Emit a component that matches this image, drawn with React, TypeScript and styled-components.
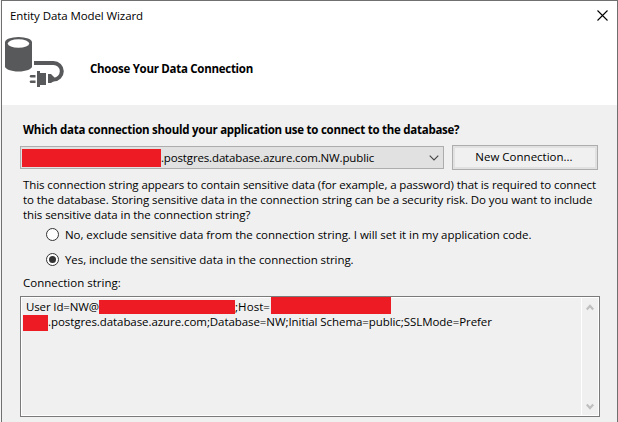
import React from "react";
import styled, { createGlobalStyle } from "styled-components";

const GlobalStyle = createGlobalStyle`
  *, *::before, *::after { box-sizing: border-box; }
  body {
    margin: 0;
    background: #f0f0f0;
    overflow: hidden;
  }
`;

const Dialog = styled.div`
  width: 617px;
  height: 422px;
  margin-left: 1px;
  border: 1px solid #707070;
  border-bottom: 0;
  background: #f0f0f0;
  color: #000;
  font: 11.5px/15px "Open Sans", "Noto Sans", sans-serif;
  overflow: hidden;
  box-shadow: -1px 0 #f6f6f6;
`;

const Header = styled.header`
  height: 104px;
  background: #fff;
`;

const TitleBar = styled.div`
  display: flex;
  justify-content: space-between;
  height: 34px;
  padding: 7px 9px 0 8px;
`;

const CloseIcon = styled.svg`
  width: 11px;
  height: 11px;
  margin-top: 2px;
`;

const Banner = styled.div`
  display: flex;
  height: 60px;
  padding-left: 2px;
`;

const DatabaseIcon = styled.svg`
  width: 62px;
  height: 54px;
  margin-right: 24px;
`;

const Text = styled.span<{ $track?: number; $bold?: boolean }>`
  display: block;
  flex: none;
  height: 15px;
  white-space: pre;
  letter-spacing: ${(p) => p.$track ?? 0}px;
  font-weight: ${(p) => (p.$bold ? 700 : 400)};
`;

const BannerTitle = styled(Text)`
  margin-top: 26px;
`;

const Body = styled.main`
  display: flex;
  flex-direction: column;
  padding: 17px 17px 0 18px;
`;

const Question = styled(Text)`
  margin-left: 3px;
`;

const ConnectionRow = styled.div`
  display: flex;
  align-items: flex-start;
  gap: 8px;
  height: 25px;
  margin-top: 8px;
`;

const Select = styled.div`
  display: flex;
  align-items: center;
  width: 424px;
  height: 23px;
  margin-top: 1px;
  padding: 0 4px 0 1px;
  border: 1px solid #adadad;
  background: #e1e1e1;
`;

const SelectText = styled(Text)`
  flex: 1;
`;

const Chevron = styled.svg`
  width: 10px;
  height: 6px;
`;

const Redaction = styled.span<{ $w: number; $h: number }>`
  flex: none;
  width: ${(p) => p.$w}px;
  height: ${(p) => p.$h}px;
  background: #ed1c24;
`;

const Button = styled.button`
  display: flex;
  justify-content: center;
  width: 146px;
  height: 25px;
  padding: 3px 2px 0 0;
  border: 1px solid #adadad;
  background: #f0f0f0;
  box-shadow: inset 0 0 0 2px #e1e1e1;
  color: inherit;
  font: inherit;
`;

const Paragraph = styled.div`
  margin: 7px 0 5px 3px;
`;

const Option = styled.label`
  display: flex;
  height: 15px;
  margin: 0 0 10px 26px;
  gap: 6px;
`;

const RadioIcon = styled.svg`
  width: 13px;
  height: 13px;
  margin-top: 1px;
`;

const FieldLabel = styled(Text)`
  margin: -2px 0 6px 3px;
`;

const StringBox = styled.div`
  display: flex;
  width: 580px;
  height: 121px;
  border: 1px solid #7a7a7a;
  background: #f0f0f0;
  box-shadow: inset 0 0 0 1px #fff;
`;

const StringContent = styled.div`
  flex: 1;
  padding-left: 2px;
`;

const StringLine = styled.div<{ $h: number; $indent?: number; $align?: string }>`
  display: flex;
  align-items: ${(p) => p.$align ?? "flex-end"};
  height: ${(p) => p.$h}px;
  padding-left: ${(p) => p.$indent ?? 0}px;
`;

const ContinuationLine = styled(StringLine)`
  margin-top: 1px;
`;

const HostText = styled(Text)`
  margin-top: -1px;
`;

const Cell = styled(Text)<{ $w: number }>`
  width: ${(p) => p.$w}px;
`;

const ScrollBar = styled.div`
  display: flex;
  flex-direction: column;
  justify-content: space-between;
  align-items: center;
  width: 18px;
  margin: 1px 0;
  padding: 6px 2px 5px 0;
  border-left: 1px solid #fff;
`;

const ScrollArrow = styled.svg`
  width: 8px;
  height: 7px;
`;

function Radio({ checked }: { checked?: boolean }) {
  return (
    <RadioIcon viewBox="0 0 13 13">
      <circle cx="6.5" cy="6.5" r="6" fill="#fff" stroke="#333" />
      {checked && <circle cx="6.5" cy="6.5" r="3.5" fill="#333" />}
    </RadioIcon>
  );
}

const warning: [string, number][] = [
  ["This connection string appears to contain sensitive data (for example, a password) that is required to connect", -0.1],
  ["to the database. Storing sensitive data in the connection string can be a security risk. Do you want to include", -0.08],
  ["this sensitive data in the connection string?", -0.07],
];

export default function App() {
  return (
    <>
      <GlobalStyle />
      <Dialog>
        <Header>
          <TitleBar>
            <Text $track={-0.09}>Entity Data Model Wizard</Text>
            <CloseIcon viewBox="0 0 11 11">
              <path d="M.5.5l10 10M10.5.5l-10 10" stroke="#000" strokeWidth="1.1" />
            </CloseIcon>
          </TitleBar>
          <Banner>
            <DatabaseIcon viewBox="4 35 62 54">
              <path d="M5 42v24.500c0 2.500 6 5 13.500 5s13.500-2.500 13.500-5V42z" fill="#58595b" />
              <ellipse cx="18.500" cy="42.500" rx="13.500" ry="5.500" fill="#58595b" />
              <ellipse cx="18.500" cy="43.500" rx="10.700" ry="4.300" fill="#fff" />
              <path d="M34 63h19.500a8.300 8.300 0 0 1 0 16.600H50" fill="none" stroke="#58595b" strokeWidth="4" />
              <path d="M37 71h3v2h6v12h-6v2h-3zM48 74h3l3 3v4l-3 2h-3zM30.500 75h5v2.500h-5l-1-1.200zM30.500 80.500h5v2.500h-5l-1-1.200z" fill="#58595b" />
            </DatabaseIcon>
            <BannerTitle $bold $track={-0.28}>Choose Your Data Connection</BannerTitle>
          </Banner>
        </Header>
        <Body>
          <Question $bold $track={-0.26}>
            Which data connection should your application use to connect to the database?
          </Question>
          <ConnectionRow>
            <Select>
              <Redaction $w={139} $h={18} />
              <SelectText $track={-0.147}>.postgres.database.azure.com.NW.public</SelectText>
              <Chevron viewBox="0 0 10 6">
                <path d="M.7.7L5 5 9.3.7" fill="none" stroke="#444" strokeWidth="1.1" />
              </Chevron>
            </Select>
            <Button>
              <Text>New Connection...</Text>
            </Button>
          </ConnectionRow>
          <Paragraph>
            {warning.map(([line, track]) => (
              <Text key={line} $track={track}>{line}</Text>
            ))}
          </Paragraph>
          <Option>
            <Radio />
            <Text $track={-0.042}>
              No, exclude sensitive data from the connection string. I will set it in my application code.
            </Text>
          </Option>
          <Option>
            <Radio checked />
            <Text $track={-0.075}>Yes, include the sensitive data in the connection string.</Text>
          </Option>
          <FieldLabel>Connection string:</FieldLabel>
          <StringBox>
            <StringContent>
              <StringLine $h={17} $indent={3}>
                <Cell $w={73} $track={-0.13}>User Id=NW@</Cell>
                <Redaction $w={136} $h={14} />
                <Cell $w={36} $track={0.07}>;Host=</Cell>
                <Redaction $w={120} $h={17} />
              </StringLine>
              <ContinuationLine $h={16} $align="flex-start">
                <Redaction $w={25} $h={16} />
                <HostText $track={-0.07}>
                  .postgres.database.azure.com;Database=NW;Initial Schema=public;SSLMode=Prefer
                </HostText>
              </ContinuationLine>
            </StringContent>
            <ScrollBar>
              <ScrollArrow viewBox="0 0 8 7">
                <path d="M.8 5.500L4 2l3.200 3.500" fill="none" stroke="#bfbfbf" strokeWidth="2.200" />
              </ScrollArrow>
              <ScrollArrow viewBox="0 0 8 7">
                <path d="M.8 1.500L4 5l3.200-3.500" fill="none" stroke="#bfbfbf" strokeWidth="2.200" />
              </ScrollArrow>
            </ScrollBar>
          </StringBox>
        </Body>
      </Dialog>
    </>
  );
}
